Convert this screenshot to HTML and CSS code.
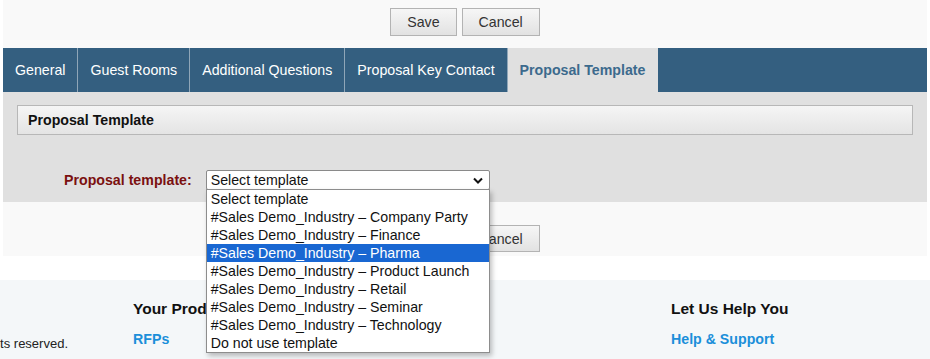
FILE: index.html
```html
<!DOCTYPE html>
<html lang="en">

<head>
    <meta charset="UTF-8">
    <title>Proposal Template</title>
    <link rel="stylesheet" href="styles.css">
</head>

<body>
    <div class="page">
        <div class="actions actions-top">
            <button class="btn">Save</button>
            <button class="btn">Cancel</button>
        </div>

        <ul class="tabs">
            <li class="tab">General</li>
            <li class="tab">Guest Rooms</li>
            <li class="tab">Additional Questions</li>
            <li class="tab">Proposal Key Contact</li>
            <li class="tab active">Proposal Template</li>
        </ul>

        <div class="panel">
            <div class="section-head">Proposal Template</div>
            <div class="field-row">
                <label class="field-label">Proposal template:</label>
                <div class="select-wrap">
                    <div class="select">
                        <span>Select template</span>
                        <svg class="chevron" width="10" height="7" viewBox="0 0 10 7">
                            <polyline points="1,1.5 5,5.5 9,1.5" fill="none" stroke="#111" stroke-width="2"/>
                        </svg>
                    </div>
                    <ul class="options">
                        <li>Select template</li>
                        <li>#Sales Demo_Industry – Company Party</li>
                        <li>#Sales Demo_Industry – Finance</li>
                        <li class="selected">#Sales Demo_Industry – Pharma</li>
                        <li>#Sales Demo_Industry – Product Launch</li>
                        <li>#Sales Demo_Industry – Retail</li>
                        <li>#Sales Demo_Industry – Seminar</li>
                        <li>#Sales Demo_Industry – Technology</li>
                        <li>Do not use template</li>
                    </ul>
                </div>
            </div>
        </div>

        <div class="actions actions-bottom">
            <button class="btn">Save</button>
            <button class="btn">Cancel</button>
        </div>
    </div>

    <footer class="footer">
        <div class="copyright"><span>© 2024 Cvent, Inc. All rights reserved.</span></div>
        <div class="footer-col products">
            <h3>Your Products</h3>
            <a href="#">RFPs</a>
        </div>
        <div class="footer-col">
            <h3>Let Us Help You</h3>
            <a href="#">Help &amp; Support</a>
        </div>
    </footer>
</body>

</html>
```

FILE: styles.css
```css
body {
    margin: 0;
    background: #fff;
    font-family: "Liberation Sans", Arial, sans-serif;
    font-size: 14.2px;
    color: #222;
}

.page {
    margin: 0 3px 24px;
}

/* button bars */
.actions {
    display: flex;
    justify-content: center;
    gap: 5px;
    background: #f9f9f9;
}

.actions-top {
    padding: 8px 0 12px;
}

.actions-bottom {
    padding: 23px 0 4px;
}

.btn {
    height: 28px;
    padding: 0 16px;
    border: 1px solid #b3b3b3;
    background: linear-gradient(#f6f6f6, #e2e2e2);
    font-family: "Liberation Sans", Arial, sans-serif;
    font-size: 14.2px;
    color: #333;
}

.actions-bottom .btn {
    height: 27px;
}

/* tabs */
.tabs {
    display: flex;
    margin: 0;
    padding: 0;
    list-style: none;
    background: #345f80;
    height: 44px;
}

.tab {
    padding: 0 12px;
    line-height: 44px;
    color: #fff;
    border-right: 1px solid #8fa6b8;
}

.tab.active {
    background: #e0e0e0;
    color: #3c6a8d;
    font-weight: bold;
    border-right: none;
    padding-right: 13px;
}

/* panel */
.panel {
    background: #e0e0e0;
    padding: 13px 14px 12px;
}

.section-head {
    height: 28px;
    line-height: 28px;
    padding-left: 10px;
    border: 1px solid #b7b7b7;
    background: linear-gradient(#f5f5f5, #e4e4e4);
    font-weight: bold;
    color: #111;
}

.field-row {
    display: flex;
    align-items: center;
    gap: 14px;
    margin-top: 35px;
    padding-left: 47px;
}

.field-label {
    font-weight: bold;
    color: #7b1010;
}

.select-wrap {
    position: relative;
}

.select {
    display: flex;
    justify-content: space-between;
    align-items: center;
    box-sizing: border-box;
    width: 284px;
    height: 20px;
    padding: 0 6px 0 4px;
    border: 1px solid #8a8a8a;
    border-radius: 2px;
    background: #fff;
    color: #111;
}

.options {
    position: absolute;
    top: 19px;
    left: 0;
    box-sizing: border-box;
    width: 284px;
    margin: 0;
    padding: 0;
    list-style: none;
    border: 1px solid #8d8d8d;
    background: #fff;
    box-shadow: 2px 3px 5px rgba(0, 0, 0, 0.25);
    z-index: 10;
}

.options li {
    height: 18px;
    line-height: 18px;
    padding-left: 4px;
    color: #111;
    white-space: nowrap;
}

.options li.selected {
    background: #1967d2;
    color: #fff;
}

/* footer */
.footer {
    display: flex;
    background: #f4f7f9;
    padding: 20px 0 0;
    height: 59px;
}

.copyright {
    width: 68px;
    margin-right: 65px;
    overflow: hidden;
    display: flex;
    justify-content: flex-end;
    padding-top: 36px;
    font-size: 13px;
    color: #222;
}

.copyright span {
    white-space: nowrap;
}

.footer-col h3 {
    margin: 0 0 13px;
    font-size: 15.5px;
    color: #111;
}

.footer-col a {
    font-weight: bold;
    color: #1b8fda;
    text-decoration: none;
}

.products {
    width: 538px;
}
```
